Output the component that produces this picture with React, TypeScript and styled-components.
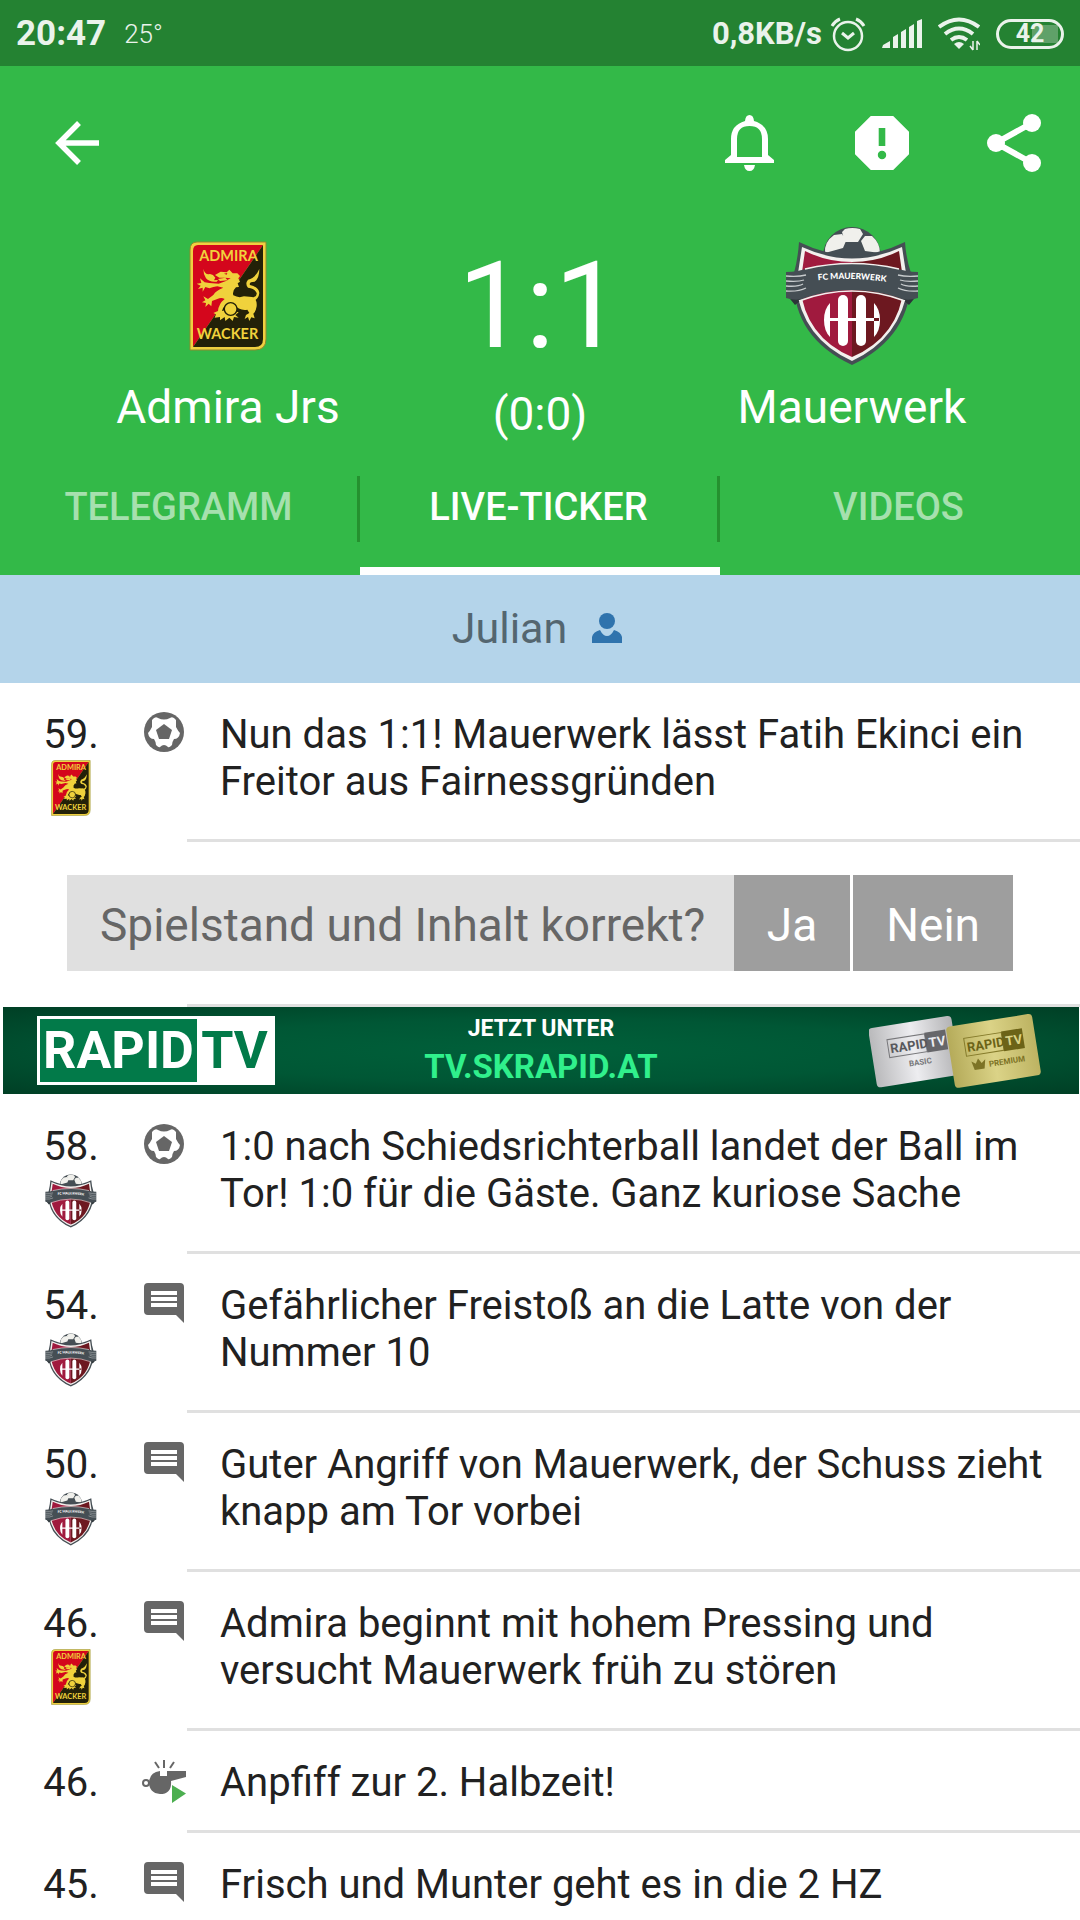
import React from 'react';
import styled, { createGlobalStyle, css } from 'styled-components';

const GlobalStyle = createGlobalStyle`
  *, *::before, *::after { box-sizing: border-box; }
  body {
    margin: 0;
    background: #ffffff;
    color: #212121;
    font-family: Roboto, 'Noto Sans', sans-serif;
  }
  h1, p, ol { margin: 0; padding: 0; font-weight: 400; }
  ol { list-style: none; }
  button { border: 0; padding: 0; background: none; font: inherit; color: inherit; cursor: pointer; }
  svg { display: block; flex: none; }
`;

const Screen = styled.div`
  width: 100%;
`;

const StatusBar = styled.div`
  display: flex;
  align-items: center;
  height: 66px;
  padding: 2px 16px 0;
  background: #248232;
  color: #eaf3eb;
`;

const Clock = styled.time`
  font-size: 35px;
  font-weight: 700;
  line-height: 40px;
`;

const Temperature = styled.span`
  margin-left: 18px;
  font-size: 26px;
  font-weight: 300;
  line-height: 40px;
`;

const StatusIcons = styled.div`
  display: flex;
  align-items: center;
  gap: 16px;
  margin-left: auto;
`;

const NetSpeed = styled.span`
  margin-right: -8px;
  font-size: 31px;
  font-weight: 700;
  line-height: 40px;
`;

const Battery = styled.span`
  display: flex;
  align-items: center;
  justify-content: center;
  width: 68px;
  height: 30px;
  border: 3px solid #eaf3eb;
  border-radius: 15px;
  background: linear-gradient(#5fa169, #5fa169) no-repeat right 3px center / 26px 18px;
  font-size: 25px;
  font-weight: 700;
  line-height: 24px;
`;

const Header = styled.header`
  background: #33b948;
  color: #ffffff;
`;

const Toolbar = styled.div`
  display: flex;
  align-items: center;
  gap: 60px;
  height: 154px;
  padding: 0 30px 0 41px;
`;

const IconButton = styled.button<{ $push?: boolean }>`
  display: flex;
  ${(p) => p.$push && css`margin-right: auto;`}
`;

const Match = styled.section`
  display: grid;
  grid-template-columns: repeat(3, minmax(0, 1fr));
  height: 216px;
  padding: 0 72px;
`;

const Side = styled.div`
  display: flex;
  flex-direction: column;
  align-items: center;
  text-align: center;
`;

const CrestSlot = styled.div`
  display: flex;
  align-items: center;
  justify-content: center;
  height: 152px;
`;

const TeamName = styled.p`
  margin-top: 8px;
  font-size: 46px;
  line-height: 54px;
  white-space: nowrap;
`;

const Score = styled.h1`
  padding-top: 16px;
  font-size: 120px;
  line-height: 140px;
`;

const HalfTime = styled.p`
  margin-top: 11px;
  font-size: 46px;
  line-height: 54px;
`;

const Tabs = styled.nav`
  display: grid;
  grid-template-columns: repeat(3, minmax(0, 1fr));
  height: 139px;
`;

const Tab = styled.button<{ $active?: boolean }>`
  display: flex;
  flex-direction: column;
  justify-content: flex-end;
  color: ${(p) => (p.$active ? '#ffffff' : '#a6e0ae')};
  font-size: 38px;
  font-weight: 500;
  line-height: 62px;

  &::after {
    content: '';
    width: 100%;
    height: 8px;
    margin-top: 25px;
    background: ${(p) => (p.$active ? '#ffffff' : 'transparent')};
  }
`;

const TabLabel = styled.span<{ $divided?: boolean }>`
  width: 100%;
  padding-bottom: 4px;
  border-right: 3px solid ${(p) => (p.$divided ? '#25912f' : 'transparent')};
`;

const Reporter = styled.div`
  display: flex;
  align-items: center;
  justify-content: center;
  gap: 25px;
  height: 108px;
  padding: 0 6px 2px 0;
  background: #b4d4ea;
  color: #546670;
  font-size: 43px;
  line-height: 50px;
`;

const Entry = styled.li`
  display: grid;
  grid-template-columns: 140px 47px minmax(0, 1fr);
`;

const Minute = styled.div`
  display: flex;
  flex-direction: column;
  align-items: center;
  padding: 28px 0 24px 2px;
  font-size: 40px;
  line-height: 47px;
`;

const SmallCrest = styled.div`
  display: flex;
  align-items: flex-end;
  height: 60px;
  padding-bottom: 2px;
`;

const EventIcon = styled.div`
  padding-top: 25px;
`;

const EntryText = styled.p`
  padding: 28px 30px 24px 33px;
  border-bottom: 3px solid #e0e0e0;
  font-size: 40px;
  line-height: 47px;
`;

const LastEntry = styled(Entry)`
  height: 87px;
  overflow: hidden;

  ${EntryText} { border-bottom: 0; }
`;

const Question = styled.li`
  padding: 33px 67px 0;
`;

const QuestionBox = styled.div`
  display: flex;
  gap: 3px;
  height: 96px;
  font-size: 46px;
  line-height: 100px;
`;

const QuestionText = styled.p`
  flex: 1;
  margin-right: -3px;
  padding-left: 33px;
  background: #e0e0e0;
  color: #666666;
  white-space: nowrap;
`;

const Answer = styled.button`
  padding: 0 33px;
  background: #9e9e9e;
  color: #ffffff;
`;

const Rule = styled.div`
  height: 3px;
  margin: 33px 0 0 187px;
  background: #e0e0e0;
`;

const AdItem = styled.li`
  padding: 0 1px 1px 3px;
`;

const Banner = styled.a`
  display: grid;
  grid-template-columns: minmax(0, 1fr) auto minmax(0, 1fr);
  align-items: center;
  height: 87px;
  padding: 0 34px;
  background: radial-gradient(ellipse at center, #00603a 0%, #005735 50%, #003f25 100%);
  color: #ffffff;
  font-weight: 700;
  text-align: center;
  text-decoration: none;
`;

const BannerLogo = styled.span`
  display: flex;
  justify-self: start;
  width: 238px;
  height: 69px;
  border: 3px solid #ffffff;
  background: #027a49;
  font-size: 52px;
  line-height: 64px;
`;

const BannerRapid = styled.span`
  flex: 1;
`;

const BannerTv = styled.span`
  width: 75px;
  background: #ffffff;
  color: #027a49;
`;

const BannerText = styled.span`
  display: flex;
  flex-direction: column;
  font-size: 23px;
  line-height: 32px;
`;

const BannerUrl = styled.span`
  color: #30f08c;
  font-size: 33px;
  line-height: 44px;
`;

const BannerCards = styled.span`
  justify-self: end;
`;

function AdmiraCrest({ height }: { height: number }) {
  return (
    <svg width={(height * 78) / 110} height={height} viewBox="0 0 78 110" role="img" aria-label="Admira Wacker">
      <path d="M8 1h69v97q0 11-11 11H1V9q0-8 7-8z" fill="#f0d040" stroke="#8f8a2c" />
      <path d="M9 4h65L4 106V10q0-6 5-6z" fill="#d4061c" />
      <path d="M74 4v94q0 8-8 8H4z" fill="#232108" />
      <g fill="#f0d23c" fontFamily="Lato, sans-serif" fontWeight="700" fontSize="14.500" textAnchor="middle">
        <text x="39.500" y="20">ADMIRA</text>
        <text x="38.500" y="98">WACKER</text>
      </g>
      <g transform="translate(-29 -22) scale(.33333)" fill="#f0d23c">
        <path d="M130 149Q134 168 150 165Q160 166 166 176L162 184L174 183L170 188Q148 190 138 178Q130 166 130 149Z" />
        <path d="M165 168L182 158L200 160L208 152L218 163L232 163L240 171L235 178L240 188L233 193L237 204L228 205Q216 216 220 229Q236 238 252 232L276 234Q292 240 290 262Q288 278 280 284L284 298L274 295L268 306L264 294L254 300L258 288L268 282L262 272Q238 276 222 256Q196 244 186 276L196 274L206 284L218 276L236 280L226 288L236 296L222 294L218 306L208 296L196 306L194 294L180 304L180 294L164 296L168 286L160 282L174 276Q176 254 194 240Q184 234 172 240L156 246L154 262L146 254L136 264L138 252L126 250L136 244L130 232L144 240L160 228Q168 214 190 206L172 202Q160 204 148 208L136 204L128 218L128 206L114 210L122 200L110 194L124 192L120 178L134 190L148 192L176 194L204 184L180 186L174 180L196 176L178 176Z" />
        <circle cx="212" cy="270" r="19" stroke="#232108" strokeWidth="4" />
        <path d="M268 236Q292 236 290 222Q284 208 264 206Q254 194 264 182Q286 178 298 150Q298 178 284 188Q266 188 270 198Q296 204 298 222Q296 240 280 246Z" />
        <path d="M192 164l10-2-2 5zM196 176l16 2-10 5z" fill="#d4061c" />
      </g>
    </svg>
  );
}

function MauerwerkCrest({ height }: { height: number }) {
  return (
    <svg width={(height * 134) / 140} height={height} viewBox="0 0 134 140" role="img" aria-label="FC Mauerwerk">
      <circle cx="67" cy="30" r="29" fill="#454e54" />
      <g fill="#f0f0ec">
        <path d="M57 6L60 3Q67 1 75 3L78 8L73 16H60ZM49 9L57 8L61 15L58 22L40 27Q39 16 49 9ZM76 15L80 10L87 10Q95 17 95 27L80 25Z" />
      </g>
      <path d="M14 16Q67 42 120 16Q121 32 126 47Q128 110 67 139Q5 110 9 47Q13 32 14 16Z" fill="#454e54" />
      <path d="M17 21Q67 44 117 21L123 60Q116 112 67 135Q17 112 11 60Z" fill="#f3f0ee" />
      <path d="M67 36Q42 36 20 25L15 60Q20 111 67 131Z" fill="#a01a3e" />
      <path d="M67 36Q92 36 114 25L119 60Q114 111 67 131Z" fill="#6d1820" />
      <path d="M1 68l9 11 10-8zM133 68l-9 11-10-8z" fill="#2c3438" />
      <path d="M1 46q12 0 22-4 44-9 88 0 10 4 22 4v26q-12 4-22-1-44-14-88 0-10 5-22 1z" fill="#454e54" />
      <path d="M20 43q47-11 94 0M14 75q53-20 106 0" fill="none" stroke="#f3f0ee" strokeWidth="1.500" />
      <path d="M1 50q12 1 20-1M1 55q12 1 18-1M1 60q12 1 17-2M1 65q12 1 20-3M133 50q-12 1-20-1M133 55q-12 1-18-1M133 60q-12 1-17-2M133 65q-12 1-20-3" fill="none" stroke="#c7cbcd" strokeWidth="1.300" />
      <path id={`name-arc-${height}`} d="M20 56q47-7 94 2" fill="none" />
      <text fill="#ffffff" fontFamily="Lato, sans-serif" fontWeight="900" fontSize="8.500" textAnchor="middle">
        <textPath href={`#name-arc-${height}`} startOffset="50%">FC MAUERWERK</textPath>
      </text>
      <g fill="#ffffff">
        <rect x="53" y="69" width="10" height="51" rx="5" />
        <rect x="71" y="69" width="10" height="51" rx="5" />
        <path d="M45 77v34q-6-6-6-17t6-17zM89 77v34q6-6 6-17t-6-17zM41 92h53v3H41z" />
      </g>
    </svg>
  );
}

function BallIcon() {
  return (
    <svg width="48" height="48" viewBox="0 0 48 48" aria-label="Tor" role="img">
      <circle cx="24" cy="24" r="20" fill="#666666" />
      <path d="M12 12Q15 8 18 10Q24 13 30 10Q33 8 36 12L36 19Q38 23 40 25Q39 31 34 31Q32 34 32 37Q29 40 28 39Q24 35 20 39Q19 40 16 37Q16 34 14 31Q9 31 8 25Q10 23 12 19Z" fill="#ffffff" />
      <path d="M24 16l8 6-3 9H19l-3-9z" fill="#666666" />
    </svg>
  );
}

function CommentIcon() {
  return (
    <svg width="48" height="48" viewBox="0 0 48 48" aria-label="Kommentar" role="img">
      <path d="M44 44l-8-8H8q-4 0-4-4V8q0-4 4-4h32q4 0 4 4z" fill="#666666" />
      <path d="M11 12h26v4H11zM11 18h26v4H11zM11 24h26v4H11z" fill="#ffffff" />
    </svg>
  );
}

function WhistleIcon() {
  return (
    <svg width="48" height="48" viewBox="0 0 48 48" aria-label="Anpfiff" role="img">
      <path d="M20 15v5h7v-5h19v6l-15 4q1 13-11 13-11-1-11-12 1-10 11-11z" fill="#666666" />
      <circle cx="6" cy="27" r="3" fill="none" stroke="#666666" strokeWidth="2" />
      <path d="M15 6l4 6M24 4v8M34 6l-4 6" stroke="#666666" strokeWidth="2" />
      <path d="M32 29l14 8.500L32 47z" fill="#4caf50" />
    </svg>
  );
}

const icons = { ball: BallIcon, comment: CommentIcon, whistle: WhistleIcon };
const crests = { admira: AdmiraCrest, mauerwerk: MauerwerkCrest };

type Event = {
  minute: number;
  icon: keyof typeof icons;
  team?: keyof typeof crests;
  text: string;
};

const latest: Event = {
  minute: 59,
  icon: 'ball',
  team: 'admira',
  text: 'Nun das 1:1! Mauerwerk lässt Fatih Ekinci ein Freitor aus Fairnessgründen',
};

const events: Event[] = [
  { minute: 58, icon: 'ball', team: 'mauerwerk', text: '1:0 nach Schiedsrichterball landet der Ball im Tor! 1:0 für die Gäste. Ganz kuriose Sache' },
  { minute: 54, icon: 'comment', team: 'mauerwerk', text: 'Gefährlicher Freistoß an die Latte von der Nummer 10' },
  { minute: 50, icon: 'comment', team: 'mauerwerk', text: 'Guter Angriff von Mauerwerk, der Schuss zieht knapp am Tor vorbei' },
  { minute: 46, icon: 'comment', team: 'admira', text: 'Admira beginnt mit hohem Pressing und versucht Mauerwerk früh zu stören' },
  { minute: 46, icon: 'whistle', text: 'Anpfiff zur 2. Halbzeit!' },
];

const earliest: Event = { minute: 45, icon: 'comment', text: 'Frisch und Munter geht es in die 2 HZ' };

function EntryContent({ event }: { event: Event }) {
  const Icon = icons[event.icon];
  const Crest = event.team && crests[event.team];
  return (
    <>
      <Minute>
        {event.minute}.
        {Crest && (
          <SmallCrest>
            <Crest height={event.team === 'admira' ? 56 : 54} />
          </SmallCrest>
        )}
      </Minute>
      <EventIcon><Icon /></EventIcon>
      <EntryText>{event.text}</EntryText>
    </>
  );
}

function StatusGlyphs() {
  return (
    <>
      <svg width="36" height="36" viewBox="0 0 36 36" fill="none" stroke="#eaf3eb" strokeWidth="2.500" aria-hidden="true">
        <circle cx="18" cy="20" r="14" />
        <path d="M12 17l6 5 6-5M2 10q3-5 8-7M34 10q-3-5-8-7" strokeWidth="3" />
      </svg>
      <svg width="40" height="30" viewBox="0 0 40 30" fill="#eaf3eb" aria-hidden="true">
        <path d="M0 29l1-3 7-4v7zM11 29V18l5-3v14zM19 29V13l5-3v19zM27 29V8l5-3v24zM35 29V2l5-2v29z" />
      </svg>
      <svg width="42" height="34" viewBox="0 0 42 34" fill="none" stroke="#eaf3eb" strokeWidth="4" aria-hidden="true">
        <path d="M1 10q20-15 40 0M7 17q14-11 28 0M13 23q8-6 16 0" />
        <path d="M16 27q5-4 10 0l-5 5z" fill="#eaf3eb" stroke="none" />
        <path d="M35 24v9M39 24v9M32 29l3 4M42 28l-3-4" strokeWidth="1.500" />
      </svg>
    </>
  );
}

export default function App() {
  return (
    <Screen>
      <GlobalStyle />
      <StatusBar>
        <Clock>20:47</Clock>
        <Temperature>25°</Temperature>
        <StatusIcons>
          <NetSpeed>0,8KB/s</NetSpeed>
          <StatusGlyphs />
          <Battery>42</Battery>
        </StatusIcons>
      </StatusBar>

      <Header>
        <Toolbar>
          <IconButton $push aria-label="Zurück">
            <svg width="72" height="72" viewBox="0 0 72 72" fill="none" stroke="#ffffff" strokeWidth="5.500">
              <path d="M58 36H18M38 16L18 36 38 56" />
            </svg>
          </IconButton>
          <IconButton aria-label="Benachrichtigungen">
            <svg width="72" height="72" viewBox="0 0 72 72" fill="#ffffff">
              <path d="M35.500 8q4 0 4.500 6Q54 18 54 32v16l6 5v3H11v-3l6-5V32q0-14 14-18Q31.500 8 35.500 8zm0 11q-12.500 0-12.500 13v18h25V32Q48 19 35.500 19z" fillRule="evenodd" />
              <path d="M30 58h11q-1 6-5.500 6t-5.500-6z" />
            </svg>
          </IconButton>
          <IconButton aria-label="Fehler melden">
            <svg width="72" height="72" viewBox="0 0 24 24" fill="#ffffff">
              <path d="M15.730 3H8.270L3 8.270v7.460L8.270 21h7.460L21 15.730V8.270L15.730 3zM12 17.400c-.720 0-1.400-.580-1.400-1.400s.580-1.400 1.400-1.400 1.400.580 1.400 1.400-.580 1.400-1.400 1.400zM13.100 13h-2.200V7h2.200v6z" />
            </svg>
          </IconButton>
          <IconButton aria-label="Teilen">
            <svg width="72" height="72" viewBox="0 0 72 72" fill="#ffffff">
              <path d="M54 16L18 36l36 20" fill="none" stroke="#ffffff" strokeWidth="6" />
              <circle cx="18" cy="36" r="9" />
              <circle cx="54" cy="16" r="9" />
              <circle cx="54" cy="56" r="9" />
            </svg>
          </IconButton>
        </Toolbar>

        <Match>
          <Side>
            <CrestSlot><AdmiraCrest height={110} /></CrestSlot>
            <TeamName>Admira Jrs</TeamName>
          </Side>
          <Side>
            <Score>1:1</Score>
            <HalfTime>(0:0)</HalfTime>
          </Side>
          <Side>
            <CrestSlot><MauerwerkCrest height={140} /></CrestSlot>
            <TeamName>Mauerwerk</TeamName>
          </Side>
        </Match>

        <Tabs>
          <Tab><TabLabel $divided>TELEGRAMM</TabLabel></Tab>
          <Tab $active aria-current="page"><TabLabel $divided>LIVE-TICKER</TabLabel></Tab>
          <Tab><TabLabel>VIDEOS</TabLabel></Tab>
        </Tabs>
      </Header>

      <Reporter>
        Julian
        <svg width="30" height="31" viewBox="0 0 30 31" fill="#2f73ad" aria-hidden="true">
          <circle cx="15" cy="8" r="8" />
          <path d="M0 30v-6q1-5 8-7 3 6 7 6t7-6q7 2 8 7v6z" />
        </svg>
      </Reporter>

      <ol>
        <Entry><EntryContent event={latest} /></Entry>
        <Question>
          <QuestionBox>
            <QuestionText>Spielstand und Inhalt korrekt?</QuestionText>
            <Answer>Ja</Answer>
            <Answer>Nein</Answer>
          </QuestionBox>
        </Question>
        <li aria-hidden="true"><Rule /></li>
        <AdItem>
          <Banner href="#rapid-tv">
            <BannerLogo>
              <BannerRapid>RAPID</BannerRapid>
              <BannerTv>TV</BannerTv>
            </BannerLogo>
            <BannerText>
              JETZT UNTER
              <BannerUrl>TV.SKRAPID.AT</BannerUrl>
            </BannerText>
            <BannerCards>
              <svg width="176" height="78" viewBox="0 0 176 78" fontFamily="Roboto, sans-serif" fontWeight="700" aria-label="Rapid TV Basic und Premium" role="img">
                <defs>
                  <linearGradient id="silver"><stop stopColor="#b9b9bb" /><stop offset=".5" stopColor="#ededf0" /><stop offset="1" stopColor="#b3b3b5" /></linearGradient>
                  <linearGradient id="gold"><stop stopColor="#b5ab5a" /><stop offset=".5" stopColor="#dbd387" /><stop offset="1" stopColor="#bdb362" /></linearGradient>
                </defs>
                <g transform="rotate(-9 43 39)">
                  <rect x="3" y="10" width="84" height="60" rx="4" fill="url(#silver)" />
                  <rect x="20" y="24" width="38" height="18" fill="none" stroke="#77777a" />
                  <rect x="58" y="23" width="21" height="20" fill="#66666a" />
                  <text x="22" y="38" fontSize="13" fill="#58585c">RAPID</text>
                  <text x="61" y="38" fontSize="13" fill="#ededf0">TV</text>
                  <text x="38" y="54" fontSize="8" fill="#77777a">BASIC</text>
                </g>
                <g transform="rotate(-9 124 39)">
                  <rect x="81" y="8" width="87" height="62" rx="4" fill="url(#gold)" />
                  <rect x="97" y="22" width="38" height="18" fill="none" stroke="#857b2b" />
                  <rect x="135" y="21" width="21" height="20" fill="#6c6317" />
                  <text x="99" y="36" fontSize="13" fill="#6c6317">RAPID</text>
                  <text x="138" y="36" fontSize="13" fill="#dbd387">TV</text>
                  <path d="M101 46l4 3 3-5 3 5 4-3-2 9h-10z" fill="#7d7325" />
                  <text x="118" y="54" fontSize="8" fill="#7d7325">PREMIUM</text>
                </g>
              </svg>
            </BannerCards>
          </Banner>
        </AdItem>
        {events.map((event) => (
          <Entry key={event.text}><EntryContent event={event} /></Entry>
        ))}
        <LastEntry><EntryContent event={earliest} /></LastEntry>
      </ol>
    </Screen>
  );
}
